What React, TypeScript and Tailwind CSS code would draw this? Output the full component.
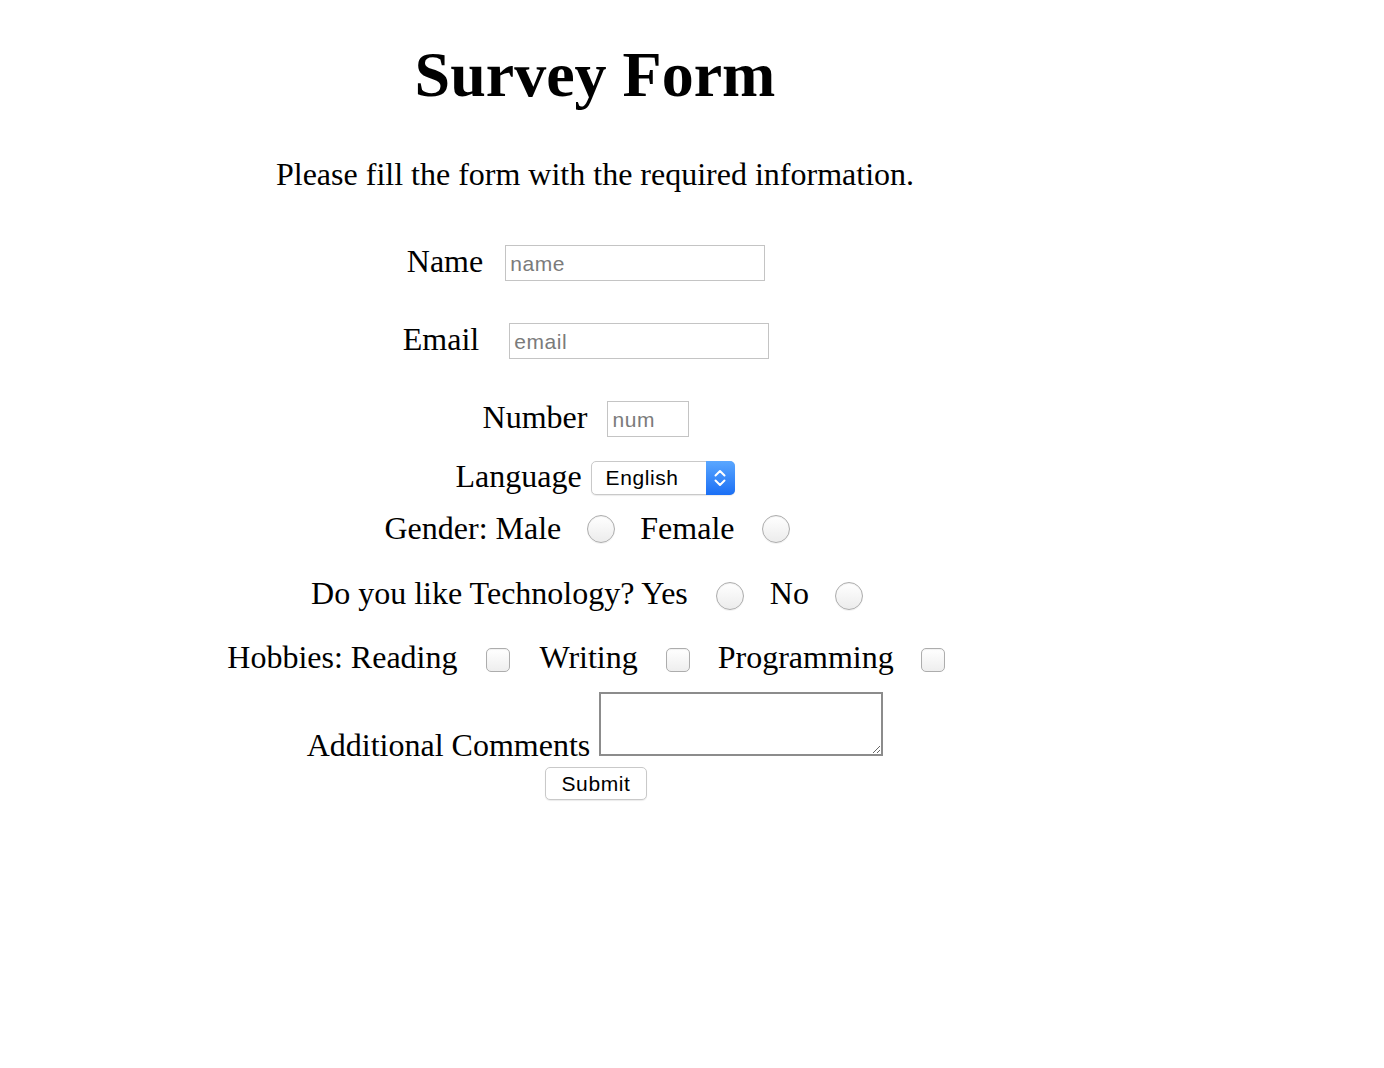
import React from 'react';

const serif = { fontFamily: '"Liberation Serif", "Times New Roman", serif' };

const textInput =
  'h-[36px] border border-[#c4c4c4] bg-white px-[4px] pt-[2px] text-[21px] tracking-[0.6px] text-black placeholder:text-[#7b7b7b] outline-none font-["Liberation_Sans",Arial,sans-serif]';

const radioCls =
  'm-0 w-[28px] h-[28px] shrink-0 appearance-none rounded-full border border-[#adadad] bg-[linear-gradient(to_bottom,#ffffff,#ececec)] shadow-[inset_0_1px_1px_rgba(0,0,0,0.06),0_1px_0_rgba(0,0,0,0.05)]';

const checkCls =
  'm-0 w-[24px] h-[24px] shrink-0 appearance-none rounded-[5px] border border-[#adadad] bg-[linear-gradient(to_bottom,#ffffff,#eeeeee)] shadow-[inset_0_1px_1px_rgba(0,0,0,0.06)]';

const label = 'text-[32px] leading-[32px] whitespace-nowrap';

const App: React.FC = () => {
  return (
    <div className="min-h-[1068px] bg-white text-black" style={serif}>
      <div className="w-[1190px] text-center">
        <h1 className="mt-[43px] text-[64px] leading-[64px] font-bold">Survey Form</h1>
        <p className="mt-[51px] text-[32px] leading-[32px]">
          Please fill the form with the required information.
        </p>

        <form onSubmit={(e) => e.preventDefault()}>
          {/* name */}
          <div className="mt-[55px] flex justify-center items-start pr-[18px]">
            <label htmlFor="name" className={label}>Name</label>
            <input id="name" type="text" placeholder="name" className={`${textInput} ml-[22px] w-[260px]`} />
          </div>

          {/* email */}
          <div className="mt-[42px] flex justify-center items-start pr-[18px]">
            <label htmlFor="email" className={label}>Email</label>
            <input id="email" type="email" placeholder="email" className={`${textInput} ml-[30px] w-[260px]`} />
          </div>

          {/* number */}
          <div className="mt-[42px] flex justify-center items-start pr-[18px]">
            <label htmlFor="number" className={label}>Number</label>
            <input id="number" type="text" placeholder="num" className={`${textInput} ml-[20px] w-[82px]`} />
          </div>

          {/* language */}
          <div className="mt-[23px] flex justify-center items-start">
            <label htmlFor="lang" className={label}>Language</label>
            <div className="relative ml-[9px] mt-[1px] w-[144px] h-[34px]">
              <select
                id="lang"
                defaultValue="English"
                className='w-full h-full appearance-none rounded-[5px] border border-[#c9c9c9] bg-white pl-[14px] text-[21px] tracking-[0.6px] text-black shadow-[0_1px_1px_rgba(0,0,0,0.08)] outline-none font-["Liberation_Sans",Arial,sans-serif]'
              >
                <option>English</option>
                <option>Hindi</option>
                <option>Other</option>
              </select>
              <span className="pointer-events-none absolute right-0 top-0 flex h-[34px] w-[29px] items-center justify-center rounded-r-[5px] bg-[linear-gradient(to_bottom,#5aa7ff,#1b6ff5)]">
                <svg width="14" height="24" viewBox="0 0 14 24" fill="none">
                  <path d="M2.5 9.5 L7 5 L11.5 9.5" stroke="#fff" strokeWidth="2" strokeLinecap="round" strokeLinejoin="round" />
                  <path d="M2.5 14.5 L7 19 L11.5 14.5" stroke="#fff" strokeWidth="2" strokeLinecap="round" strokeLinejoin="round" />
                </svg>
              </span>
            </div>
          </div>

          {/* gender */}
          <div className="mt-[17px] flex justify-center items-start pr-[16px]">
            <span className={label}>Gender: Male</span>
            <input type="radio" name="gender" className={`${radioCls} ml-[26px] mt-[3px]`} />
            <span className={`${label} ml-[25px]`}>Female</span>
            <input type="radio" name="gender" className={`${radioCls} ml-[27px] mt-[3px]`} />
          </div>

          {/* technology */}
          <div className="mt-[33px] flex justify-center items-start pr-[16px]">
            <span className={label}>Do you like Technology? Yes</span>
            <input type="radio" name="tech" className={`${radioCls} ml-[28px] mt-[5px]`} />
            <span className={`${label} ml-[26px]`}>No</span>
            <input type="radio" name="tech" className={`${radioCls} ml-[26px] mt-[5px]`} />
          </div>

          {/* hobbies */}
          <div className="mt-[31px] flex justify-center items-start pr-[18px]">
            <span className={label}>Hobbies: Reading</span>
            <input type="checkbox" className={`${checkCls} ml-[29px] mt-[7px]`} />
            <span className={`${label} ml-[29px]`}>Writing</span>
            <input type="checkbox" className={`${checkCls} ml-[28px] mt-[7px]`} />
            <span className={`${label} ml-[28px]`}>Programming</span>
            <input type="checkbox" className={`${checkCls} ml-[27px] mt-[7px]`} />
          </div>

          {/* comments */}
          <div className="mt-[19px] flex justify-center items-start">
            <label htmlFor="comments" className={`${label} mt-[37px]`}>Additional Comments</label>
            <textarea
              id="comments"
              className="ml-[9px] w-[284px] h-[64px] border-2 border-[#8c8c8c] bg-white outline-none"
            />
          </div>

          <div className="mt-[6px] flex justify-center pl-[2px]">
            <button
              type="submit"
              className='w-[102px] h-[33px] rounded-[5px] border border-[#c9c9c9] bg-white text-[21px] tracking-[0.6px] leading-[21px] text-black shadow-[0_1px_1px_rgba(0,0,0,0.08)] font-["Liberation_Sans",Arial,sans-serif]'
            >
              Submit
            </button>
          </div>
        </form>
      </div>
    </div>
  );
};

export default App;
